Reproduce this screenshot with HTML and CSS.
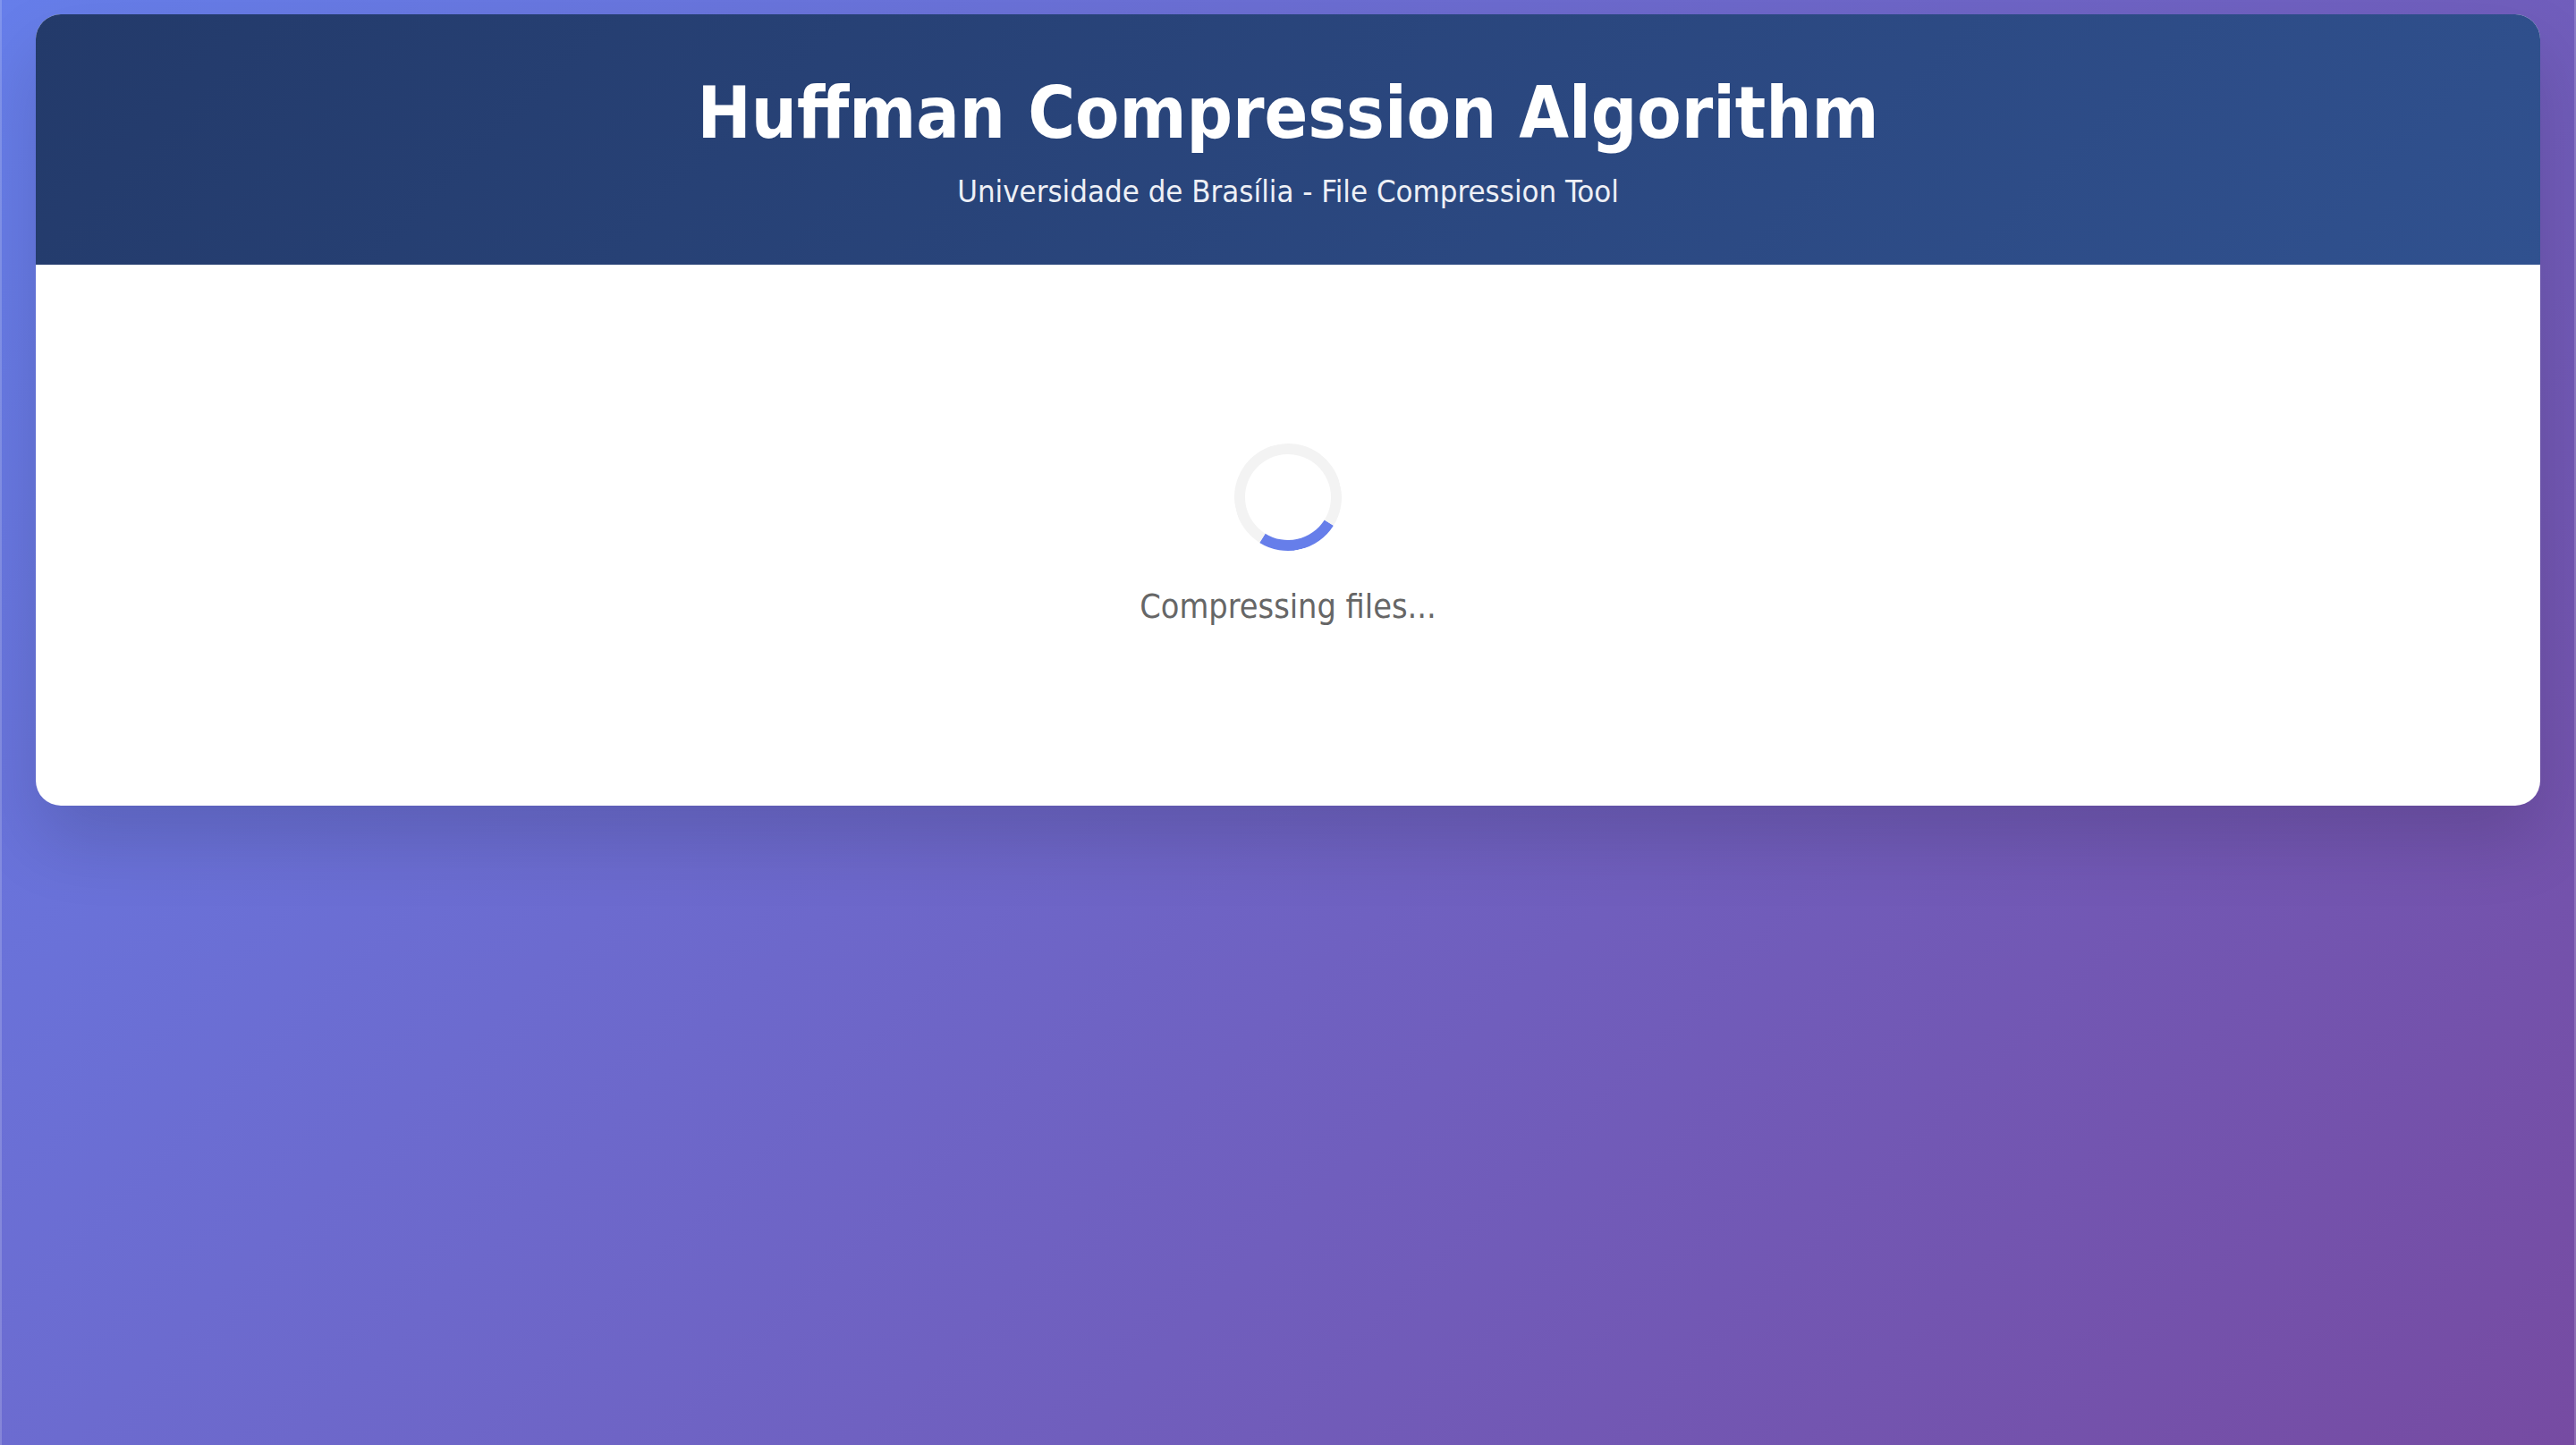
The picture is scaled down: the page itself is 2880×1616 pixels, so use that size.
FILE: index.html
```html
<!DOCTYPE html>
<html lang="en">
<head>
<meta charset="utf-8">
<title>Huffman Compression Algorithm</title>
<link rel="stylesheet" href="styles.css">
</head>
<body>
  <main class="card">
    <header class="card-header">
      <h1 class="title">Huffman Compression Algorithm</h1>
      <p class="subtitle">Universidade de Brasília - File Compression Tool</p>
    </header>
    <section class="card-body">
      <div class="loading">
        <div class="spinner"></div>
        <p class="loading-text">Compressing files...</p>
      </div>
    </section>
  </main>
</body>
</html>
```

FILE: styles.css
```css
html {
  min-height: 100%;
  background: #6c6fcc;
}

body {
  margin: 0;
  min-height: 1616px;
  box-sizing: border-box;
  padding: 16px 40px;
  font-family: "DejaVu Sans Condensed", "DejaVu Sans", Verdana, sans-serif;
  background: linear-gradient(135deg, #667eea 0%, #764ba2 100%);
  box-shadow: inset 2px 0 0 rgba(255, 255, 255, 0.18), inset -2px 0 0 rgba(255, 255, 255, 0.18);
}

.card {
  display: flex;
  flex-direction: column;
  background: #ffffff;
  border-radius: 28px;
  overflow: hidden;
  box-shadow: 0 40px 80px rgba(0, 0, 0, 0.14);
}

.card-header {
  display: flex;
  flex-direction: column;
  align-items: center;
  padding: 71px 40px 64px;
  background: linear-gradient(135deg, #233a6a 0%, #30518f 100%);
  color: #ffffff;
}

.title {
  margin: 0;
  font-size: 80px;
  line-height: 1;
  font-weight: 700;
}

.subtitle {
  margin: 30px 0 0;
  font-size: 34.5px;
  line-height: 1;
  color: #eef0f6;
}

.card-body {
  padding: 200px 40px 204px;
}

.loading {
  display: flex;
  flex-direction: column;
  align-items: center;
}

.spinner {
  width: 120px;
  height: 120px;
  box-sizing: border-box;
  border: 12px solid #f3f3f3;
  border-top-color: #667eea;
  border-radius: 50%;
  transform: rotate(167deg);
}

.loading-text {
  margin: 44px 0 0;
  font-size: 37.5px;
  line-height: 1;
  color: #666666;
}
```
